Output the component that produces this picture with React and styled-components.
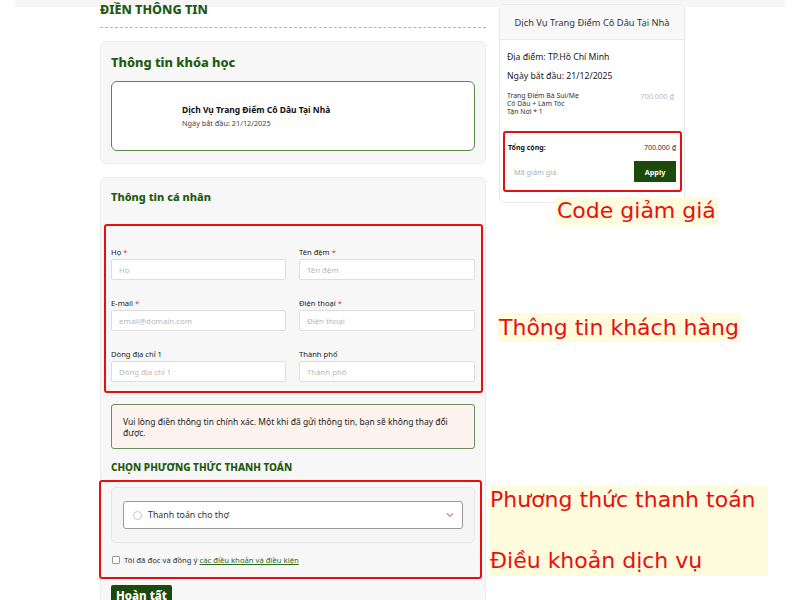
import React from 'react';
import styled, { createGlobalStyle } from 'styled-components';

const GlobalStyle = createGlobalStyle`
  html, body {
    margin: 0;
    padding: 0;
    background: #fff;
  }
  body {
    font-family: "Noto Sans", "Open Sans", Arial, sans-serif;
    color: #222;
  }
  * { box-sizing: border-box; }
`;

const GREEN = '#1f5a10';
const DARK = '#1c4a0b';

const Page = styled.div`
  position: relative;
  width: 800px;
  height: 600px;
  overflow: hidden;
  display: flex;
  align-items: flex-start;
  gap: 13px;
  padding-left: 100px;
  background: linear-gradient(#f6f6f6, #f6f6f6) 15px 0 / 770px 7px no-repeat;
`;

const Main = styled.div`
  width: 386px;
  display: flex;
  flex-direction: column;
`;

const PageTitle = styled.h1`
  margin: 0;
  padding-top: 1px;
  padding-bottom: 8px;
  font-size: 12.6px;
  line-height: 18px;
  font-weight: 800;
  color: ${GREEN};
  border-bottom: 1px dashed #b5b5b5;
`;

const Card = styled.section`
  margin-top: 13px;
  background: #f7f7f7;
  border: 1px solid #ececec;
  border-radius: 6px;
  padding: ${({ $pad }) => $pad || '0 10px 12px'};
`;

const CardTitle = styled.h2`
  margin: 0;
  font-size: ${({ $size }) => $size || '12.8px'};
  line-height: 20px;
  font-weight: 800;
  color: ${GREEN};
  padding: ${({ $pad }) => $pad || '10px 0 9px'};
`;

const CourseBox = styled.div`
  height: 70px;
  background: #fff;
  border: 1.5px solid #5a8749;
  border-radius: 6px;
  padding-left: 70px;
  display: flex;
  flex-direction: column;
  justify-content: center;
  gap: 3px;
`;

const CourseName = styled.div`
  font-size: 8.5px;
  font-weight: 700;
  color: #111;
  line-height: 11px;
`;

const SmallText = styled.div`
  font-size: 7.3px;
  color: #444;
  line-height: 10px;
`;

const Highlight = styled.div`
  border: 2px solid #e60f0f;
  border-radius: 3px;
  margin: ${({ $m }) => $m || '0'};
  padding: ${({ $p }) => $p || '0'};
`;

const FieldGrid = styled.div`
  display: grid;
  grid-template-columns: 175px 176px;
  column-gap: 13px;
  row-gap: 18px;
`;

const Field = styled.label`
  display: flex;
  flex-direction: column;
  gap: 2px;
`;

const Label = styled.span`
  font-size: 7.6px;
  line-height: 10px;
  color: #222;
  em {
    font-style: normal;
    color: #d33;
  }
`;

const Input = styled.input`
  height: 21px;
  width: 100%;
  border: 1px solid #dedede;
  border-radius: 2px;
  background: #fff;
  padding: 0 7px;
  font-family: inherit;
  font-size: 7.8px;
  outline: none;
  &::placeholder { color: #b8b8b8; }
`;

const Notice = styled.div`
  margin-top: 11px;
  background: #fdf3ee;
  border: 1.5px solid #6a8f5c;
  border-radius: 3px;
  padding: 11px 11px 10px;
  font-size: 8.5px;
  line-height: 11px;
  color: #222;
`;

const SectionTitle = styled.h3`
  margin: 0;
  padding: 12px 0 6px;
  font-size: 10px;
  line-height: 13px;
  font-weight: 800;
  color: ${GREEN};
`;

const PayCard = styled.div`
  background: #f5f5f5;
  border: 1px solid #e6e6e6;
  border-radius: 5px;
  padding: 13px 11px;
`;

const Select = styled.div`
  height: 28px;
  background: #fff;
  border: 1px solid #9a9a9a;
  border-radius: 3px;
  display: flex;
  align-items: center;
  padding: 0 8px 0 9px;
  gap: 6px;
  font-size: 8.8px;
  color: #333;
  span { flex: 1; }
`;

const Radio = styled.i`
  width: 9px;
  height: 9px;
  border: 1px solid #c8c8c8;
  border-radius: 50%;
  background: #fff;
`;

const Terms = styled.label`
  display: flex;
  align-items: center;
  gap: 4px;
  padding: 12px 0 12px 1px;
  font-size: 7.7px;
  color: #333;
  a {
    color: #2f6b1c;
    text-decoration: underline;
    margin-left: -2px;
  }
`;

const Box = styled.i`
  width: 8px;
  height: 8px;
  border: 1px solid #999;
  border-radius: 1px;
  background: #fff;
`;

const Submit = styled.button`
  margin-top: 6px;
  align-self: flex-start;
  background: ${DARK};
  color: #fff;
  border: none;
  border-radius: 2px;
  font-family: inherit;
  font-size: 11.5px;
  font-weight: 800;
  padding: 3px 5px 6px;
`;

const Aside = styled.aside`
  margin-top: 4px;
  width: 186px;
  background: #fff;
  border: 1px solid #e8e8e8;
  border-radius: 6px;
  overflow: hidden;
`;

const AsideHead = styled.div`
  height: 35px;
  display: flex;
  align-items: center;
  justify-content: center;
  background: #f8f8f8;
  border-bottom: 1px solid #e8e8e8;
  font-size: 9.3px;
  color: #333;
`;

const AsideBody = styled.div`
  padding: 11px 2px 10px 3px;
`;

const InfoLine = styled.div`
  font-size: 8.7px;
  line-height: 12px;
  color: #222;
  padding: 0 4px;
  margin-bottom: 7px;
`;

const Item = styled.div`
  display: flex;
  justify-content: space-between;
  padding: 0 8px 0 4px;
  margin-top: 10px;
  font-size: 6.9px;
  line-height: 8px;
  color: #333;
  b {
    font-weight: 400;
    color: #bdbdbd;
    font-size: 7.4px;
  }
`;

const Total = styled.div`
  display: flex;
  justify-content: space-between;
  font-size: 7px;
  line-height: 10px;
  color: #333;
  strong { font-weight: 700; color: #111; }
`;

const Coupon = styled.div`
  display: flex;
  margin-top: 8px;
  height: 21px;
`;

const CouponInput = styled.input`
  flex: 1;
  min-width: 0;
  border: none;
  background: #fff;
  padding: 0 6px;
  font-family: inherit;
  font-size: 7.3px;
  outline: none;
  &::placeholder { color: #b0b0b0; }
`;

const Apply = styled.button`
  width: 42px;
  border: none;
  background: ${DARK};
  color: #fff;
  font-family: inherit;
  font-size: 7.3px;
  font-weight: 700;
`;

const Callout = styled.div`
  position: absolute;
  left: ${({ $x }) => $x}px;
  top: ${({ $y }) => $y}px;
  background: #fffbdd;
  color: #e8100f;
  font-family: "DejaVu Sans", Verdana, sans-serif;
  font-size: 22px;
  line-height: ${({ $lh }) => $lh || 28}px;
  padding: ${({ $p }) => $p || '0 2px'};
  white-space: nowrap;
`;

const CalloutLine = styled.span`
  display: block;
  margin-top: ${({ $gap }) => $gap || 0}px;
`;

const Chevron = () => (
  <svg width="8" height="6" viewBox="0 0 8 6">
    <polyline points="1,1.5 4,4.5 7,1.5" fill="none" stroke="#e5787a" strokeWidth="1.1" />
  </svg>
);

const fields = [
  { label: 'Họ', req: true, ph: 'Họ' },
  { label: 'Tên đệm', req: true, ph: 'Tên đệm' },
  { label: 'E-mail', req: true, ph: 'email@domain.com' },
  { label: 'Điện thoại', req: true, ph: 'Điện thoại' },
  { label: 'Dòng địa chỉ 1', ph: 'Dòng địa chỉ 1' },
  { label: 'Thành phố', ph: 'Thành phố' },
];

export default function App() {
  return (
    <>
      <GlobalStyle />
      <Page>
        <Main>
          <PageTitle>ĐIỀN THÔNG TIN</PageTitle>

          <Card>
            <CardTitle>Thông tin khóa học</CardTitle>
            <CourseBox>
              <CourseName>Dịch Vụ Trang Điểm Cô Dâu Tại Nhà</CourseName>
              <SmallText>Ngày bắt đầu: 21/12/2025</SmallText>
            </CourseBox>
          </Card>

          <Card $pad="0 10px 20px">
            <CardTitle $size="11px" $pad="9px 0 17px">Thông tin cá nhân</CardTitle>
            <Highlight $m="0 -8px 0 -7px" $p="21px 7px 9px 5px">
              <FieldGrid>
                {fields.map((f) => (
                  <Field key={f.label}>
                    <Label>
                      {f.label}
                      {f.req && <em> *</em>}
                    </Label>
                    <Input placeholder={f.ph} />
                  </Field>
                ))}
              </FieldGrid>
            </Highlight>

            <Notice>
              Vui lòng điền thông tin chính xác. Một khi đã gửi thông tin, bạn sẽ không thay đổi được.
            </Notice>

            <SectionTitle>CHỌN PHƯƠNG THỨC THANH TOÁN</SectionTitle>

            <Highlight $m="0 -7px 0 -12px" $p="5px 5px 0 10px">
              <PayCard>
                <Select>
                  <Radio />
                  <span>Thanh toán cho thợ</span>
                  <Chevron />
                </Select>
              </PayCard>
              <Terms>
                <Box />
                Tôi đã đọc và đồng ý <a href="#terms">các điều khoản và điều kiện</a>
              </Terms>
            </Highlight>

            <Submit>Hoàn tất</Submit>
          </Card>
        </Main>

        <Aside>
          <AsideHead>Dịch Vụ Trang Điểm Cô Dâu Tại Nhà</AsideHead>
          <AsideBody>
            <InfoLine>Địa điểm: TP.Hồ Chí Minh</InfoLine>
            <InfoLine>Ngày bắt đầu: 21/12/2025</InfoLine>
            <Item>
              <span>
                Trang Điểm Bà Sui/Mẹ
                <br />
                Cô Dâu + Làm Tóc
                <br />
                Tận Nơi * 1
              </span>
              <b>700.000 ₫</b>
            </Item>
            <Highlight $m="15px 0 0" $p="10px 4px 8px 3px">
              <Total>
                <strong>Tổng cộng:</strong>
                <span>700.000 ₫</span>
              </Total>
              <Coupon>
                <CouponInput placeholder="Mã giảm giá" />
                <Apply>Apply</Apply>
              </Coupon>
            </Highlight>
          </AsideBody>
        </Aside>

        <Callout $x={555} $y={197}>Code giảm giá</Callout>
        <Callout $x={497} $y={313} $lh={29}>Thông tin khách hàng</Callout>
        <Callout $x={490} $y={485} $lh={30} $p="0 12px 0 0">
          <CalloutLine>Phương thức thanh toán</CalloutLine>
          <CalloutLine $gap={31}>Điều khoản dịch vụ</CalloutLine>
        </Callout>
      </Page>
    </>
  );
}
